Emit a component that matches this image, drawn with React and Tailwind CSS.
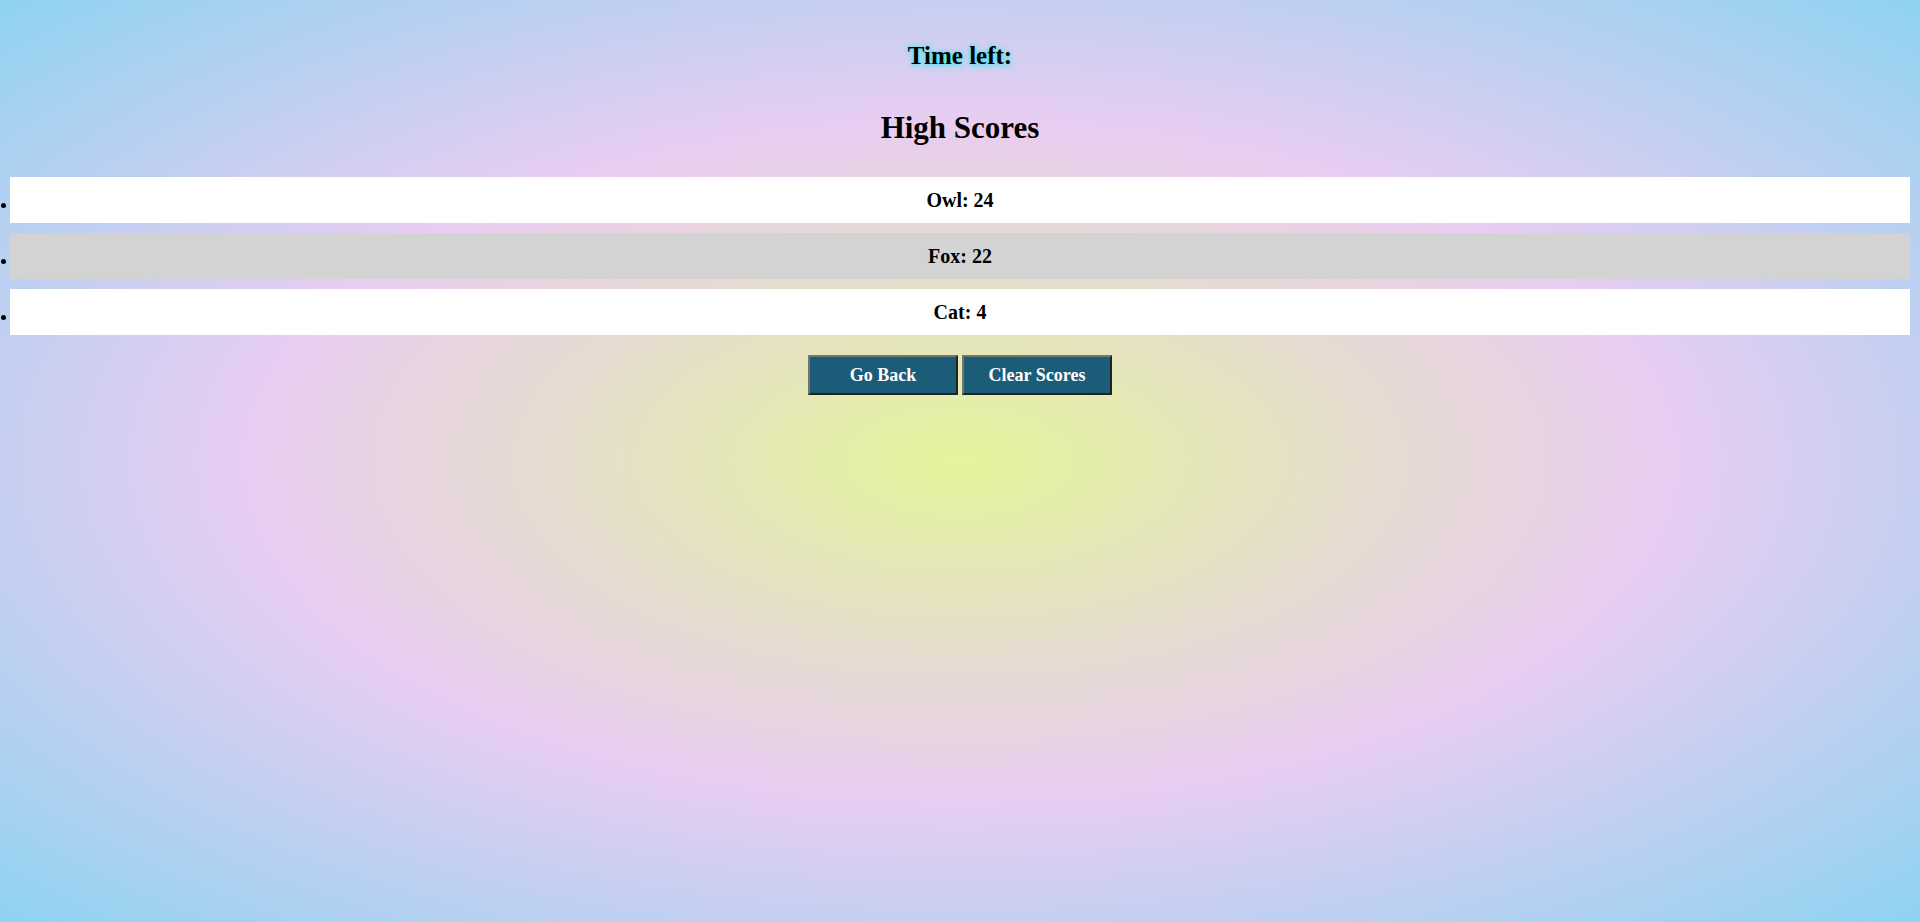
const SCORES = [
  { name: 'Owl', score: 24 },
  { name: 'Fox', score: 22 },
  { name: 'Cat', score: 4 },
]

export default function App() {
  return (
    <div
      className="min-h-screen w-full text-black font-['Liberation_Serif',serif] bg-[radial-gradient(ellipse_at_center,#e3f59a_0%,#e6dccf_30%,#e8cdf1_52%,#8fd3f1_100%)]"
    >
      <div className="pt-[41px] text-center">
        <h2 className="text-[25px] leading-[30px] font-bold [text-shadow:0_0_5px_#2ee4f2,0_2px_6px_#5ce8f5]">Time left:</h2>
      </div>

      <h1 className="mt-[39px] text-center text-[31px] leading-[36px] font-bold">High Scores</h1>

      <ul className="mt-[31px] pr-[10px]">
        {SCORES.map((s, i) => (
          <li key={s.name} className="mb-[10px] flex">
            {/* bullet column */}
            <div className="w-[10px] flex items-center pt-[10px]">
              <span className="ml-[1px] w-[5px] h-[5px] rounded-full bg-black" />
            </div>
            <div className={"flex-1 h-[46px] flex items-center justify-center " + (i % 2 === 1 ? 'bg-[#d3d3d3]' : 'bg-white')}>
              <span className="text-[20px] font-bold">{s.name}: {s.score}</span>
            </div>
          </li>
        ))}
      </ul>

      <div className="mt-[20px] flex justify-center gap-[4px]">
        <button className="w-[150px] h-[40px] bg-[#1b5c78] text-white text-[18px] font-bold border-2 border-t-[#76746f] border-l-[#76746f] border-b-[#222222] border-r-[#222222]">
          Go Back
        </button>
        <button className="w-[150px] h-[40px] bg-[#1b5c78] text-white text-[18px] font-bold border-2 border-t-[#76746f] border-l-[#76746f] border-b-[#222222] border-r-[#222222]">
          Clear Scores
        </button>
      </div>
    </div>
  )
}
